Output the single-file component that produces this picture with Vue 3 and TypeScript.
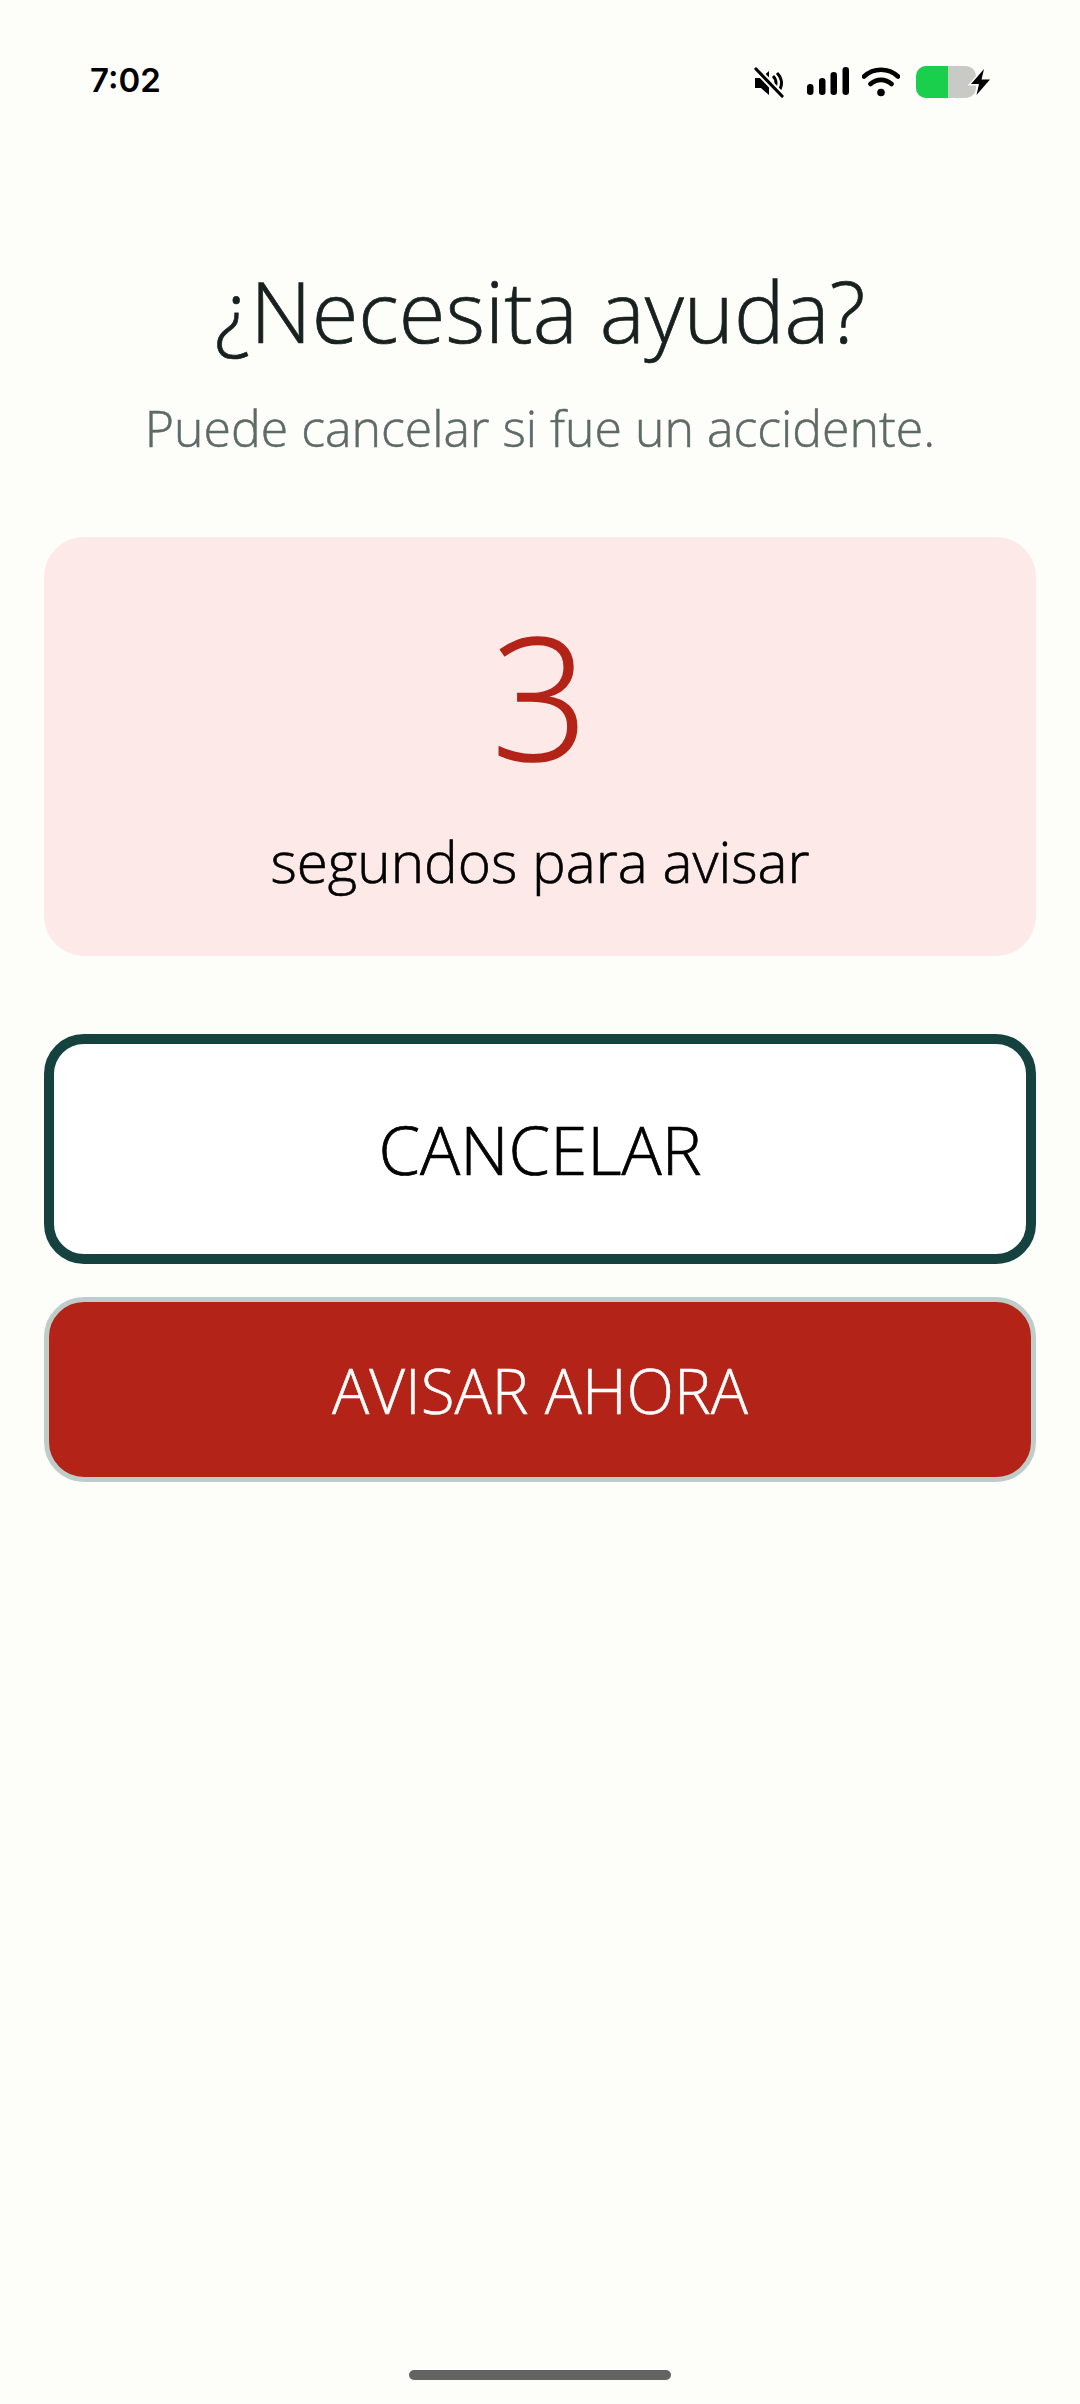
<script setup lang="ts">
const title: string = '¿Necesita ayuda?'
</script>

<template>
  <div class="screen">
    <header class="status">
      <span class="time">7:02</span>
      <div class="icons">
        <svg class="mute" width="32" height="32" viewBox="0 0 32 32">
          <path d="M2 11h6l8-7v24l-8-7H2z" fill="#000" />
          <path d="M20 9c4 4 4 10 0 14M24 6c6 6 6 14 0 20" fill="none" stroke="#000" stroke-width="3" />
          <path d="M1 0l30 31" stroke="#fdfef9" stroke-width="7" />
          <path d="M3 2l26 27" stroke="#000" stroke-width="3.200" stroke-linecap="round" />
        </svg>
        <svg class="signal" width="42" height="28" viewBox="0 0 42 28">
          <rect x="0" y="17" width="6.5" height="11" rx="3.2" />
          <rect x="12" y="11" width="6.5" height="17" rx="3.2" />
          <rect x="23.5" y="5" width="6.5" height="23" rx="3.2" />
          <rect x="35.5" y="0" width="6.5" height="28" rx="3.2" />
        </svg>
        <svg class="wifi" width="38" height="30" viewBox="0 0 38 30">
          <path d="M2 9.5C11.5 .5 26.500 .5 36 9.500M8.500 17c6-5.500 15-5.500 21 0" fill="none" stroke="#000" stroke-width="4.600" stroke-linecap="round" />
          <circle cx="19" cy="25.500" r="3.800" />
        </svg>
        <div class="battery">
          <div class="battery-track">
            <div class="battery-fill"></div>
          </div>
          <svg class="bolt" width="26" height="30" viewBox="0 0 26 30">
            <path d="M16 2 3 17h8L8.500 28 22 12.500h-8.500z" fill="#000" stroke="#fdfef9" stroke-width="3" paint-order="stroke" />
          </svg>
        </div>
      </div>
    </header>

    <main class="content">
      <h1 class="title">{{ title }}</h1>
      <p class="subtitle">Puede cancelar si fue un accidente.</p>

      <section class="countdown">
        <div class="number">3</div>
        <div class="label">segundos para avisar</div>
      </section>

      <button class="btn cancel" type="button">CANCELAR</button>
      <button class="btn alert" type="button">AVISAR AHORA</button>
    </main>

    <div class="home-bar"></div>
  </div>
</template>

<style>
html, body { margin: 0; background: #fdfef9; }
</style>

<style scoped>
.screen {
  width: 1080px;
  height: 2404px;
  background: #fdfef9;
  display: flex;
  flex-direction: column;
  font-family: "Open Sans", "Noto Sans", sans-serif;
  overflow: hidden;
}
.status {
  height: 160px;
  flex: none;
  box-sizing: border-box;
  padding: 60px 86px 0 90px;
  display: flex;
  justify-content: space-between;
  align-items: flex-start;
}
.time {
  font-family: Inter, sans-serif;
  font-weight: 600;
  font-size: 33px;
  line-height: 40px;
  color: #000;
}
.icons {
  display: flex;
  align-items: center;
  height: 40px;
  padding-top: 2px;
}
.mute { margin-right: 22px; margin-top: 2px; }
.signal { margin-right: 13px; margin-top: -2px; }
.wifi { margin-right: 16px; }
.battery { display: flex; align-items: center; }
.battery-track {
  width: 60px;
  height: 32px;
  border-radius: 10px;
  background: #c9cac5;
  overflow: hidden;
}
.battery-fill { width: 32px; height: 100%; background: #19cf4c; }
.bolt { margin-left: -8px; }
.content {
  flex: 1;
  box-sizing: border-box;
  padding: 0 44px;
  display: flex;
  flex-direction: column;
  align-items: stretch;
  text-align: center;
}
.title {
  margin: 98px 0 0;
  font-size: 85px;
  line-height: 104px;
  font-weight: 300;
  color: #18211f;
  -webkit-text-stroke: 0.7px #18211f;
}
.subtitle {
  margin: 36px 0 0;
  font-size: 50px;
  line-height: 60px;
  font-weight: 300;
  color: #5d6a66;
  -webkit-text-stroke: 0.5px #5d6a66;
}
.countdown {
  margin-top: 79px;
  height: 419px;
  box-sizing: border-box;
  background: #fde9e7;
  border-radius: 40px;
  display: flex;
  flex-direction: column;
  align-items: center;
}
.number {
  margin-top: 72px;
  font-size: 170px;
  line-height: 170px;
  font-weight: 300;
  color: #b32317;
  -webkit-text-stroke: 1.5px #b32317;
}
.label {
  margin-top: 47px;
  font-size: 56.6px;
  line-height: 72px;
  font-weight: 300;
  color: #000;
  -webkit-text-stroke: 0.6px #000;
}
.btn {
  display: block;
  width: 100%;
  box-sizing: border-box;
  font-family: inherit;
  font-weight: 300;
  text-align: center;
  padding: 0;
}
.cancel {
  margin-top: 78px;
  height: 230px;
  background: #fff;
  border: 10px solid #15423e;
  border-radius: 40px;
  font-size: 67px;
  color: #000;
  -webkit-text-stroke: 0.7px #000;
}
.alert {
  margin-top: 33px;
  height: 185px;
  background: #b32317;
  border: 5px solid #bfcdc8;
  border-radius: 40px;
  font-size: 62px;
  color: #fff;
  -webkit-text-stroke: 0.5px #fff;
}
.home-bar {
  flex: none;
  width: 262px;
  height: 10px;
  border-radius: 5px;
  background: #636462;
  margin: 0 auto 24px;
}
</style>
